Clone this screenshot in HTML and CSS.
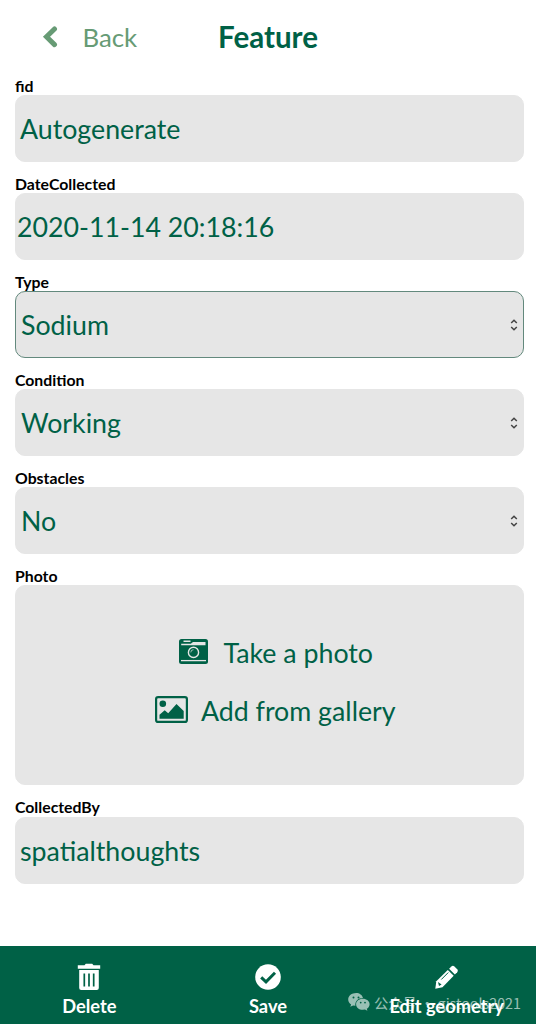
FILE: index.html
```html
<!DOCTYPE html>
<html lang="en">
<head>
<meta charset="utf-8">
<title>Feature</title>
<link rel="stylesheet" href="styles.css">
</head>
<body>
<div class="screen">
  <header class="header">
    <a class="back">
      <svg class="back-icon" width="16" height="24" viewBox="0 0 16 24"><path d="M12.500 4 4.500 11.800l8 7.800" fill="none" stroke="currentColor" stroke-width="5" stroke-linecap="round"/></svg>
      <span>Back</span>
    </a>
    <h1 class="title">Feature</h1>
  </header>
  <main class="form">
    <section class="field"><label class="label">fid</label><div class="box text">Autogenerate</div></section>
    <section class="field"><label class="label">DateCollected</label><div class="box date">2020-11-14 20:18:16</div></section>
    <section class="field"><label class="label">Type</label><div class="box select active"><span>Sodium</span><svg class="arrows" width="8" height="12" viewBox="0 0 8 12"><path d="M1.200 4 4 1.200 6.800 4M1.200 8 4 10.800 6.800 8"/></svg></div></section>
    <section class="field"><label class="label">Condition</label><div class="box select"><span>Working</span><svg class="arrows" width="8" height="12" viewBox="0 0 8 12"><path d="M1.200 4 4 1.200 6.800 4M1.200 8 4 10.800 6.800 8"/></svg></div></section>
    <section class="field"><label class="label">Obstacles</label><div class="box select"><span>No</span><svg class="arrows" width="8" height="12" viewBox="0 0 8 12"><path d="M1.200 4 4 1.200 6.800 4M1.200 8 4 10.800 6.800 8"/></svg></div></section>
    <section class="field photo-field"><label class="label">Photo</label>
      <div class="box photo">
        <div class="action camera">
          <svg width="29" height="25" viewBox="0 0 29 25"><rect width="29" height="25" rx="2.500" fill="currentColor"/><path d="M4.500 1.600h7v1.500h-7zM2.200 4.700h9.600l2.200-1.700h12.500v3.200H2.200z" fill="#e6e6e6"/><path d="M2 21.600h25" stroke="#e6e6e6" stroke-width="1.300"/><circle cx="14.500" cy="13.400" r="5.100" fill="none" stroke="#e6e6e6" stroke-width="1.400"/><path d="M11.800 13.400a2.700 2.700 0 0 1 2.700-2.700" fill="none" stroke="#e6e6e6" stroke-width=".7"/></svg>
          <span>Take a photo</span>
        </div>
        <div class="action gallery">
          <svg width="33" height="27" viewBox="0 0 33 27"><rect x="1.100" y="1.100" width="30.800" height="24.800" rx="2" fill="none" stroke="currentColor" stroke-width="2.200"/><circle cx="7.800" cy="7.800" r="3.300" fill="currentColor"/><path d="M4.500 22.800v-4l5.200-4.600 3.500 3L21.500 8l7.200 7v7.800z" fill="currentColor"/></svg>
          <span>Add from gallery</span>
        </div>
      </div>
    </section>
    <section class="field"><label class="label last-label">CollectedBy</label><div class="box text last">spatialthoughts</div></section>
  </main>
  <footer class="toolbar">
    <div class="watermark">
      <svg width="22" height="18" viewBox="0 0 22 18"><path d="M8.200 0C3.700 0 .2 2.800.2 6.400c0 2 1.100 3.800 2.900 5l-.8 2.400 2.800-1.400 2.300.4C6.700 8.400 10 5 15 5 14.300 2 11.500 0 8.200 0z"/><path d="M14.800 5.700c-3.800 0-6.700 2.400-6.700 5.500s2.900 5.600 6.700 5.600l2.200-.3 2.400 1.300-.6-2c1.800-1.100 2.800-2.700 2.800-4.600 0-3.100-3-5.500-6.800-5.500z"/><g fill="#006146"><circle cx="5.500" cy="4.500" r="1"/><circle cx="10.500" cy="4.500" r="1"/><circle cx="12.700" cy="9.600" r=".9"/><circle cx="17" cy="9.600" r=".9"/></g></svg>
      <span>公众号 · gistools2021</span>
    </div>
    <div class="tool">
      <svg width="28" height="30" viewBox="0 0 28 30"><path d="M2.800 3.300h6.700l1.300-1.600h6.400l1.300 1.600h6.700v3.400H2.800z" fill="#fff"/><path d="M4.200 8h19.600v18a2 2 0 0 1-2 2H6.200a2 2 0 0 1-2-2z" fill="#fff"/><path d="M9.300 11.500v13M14 11.500v13M18.700 11.500v13" stroke="#006146" stroke-width="1.700"/></svg>
      <span>Delete</span>
    </div>
    <div class="tool">
      <svg width="28" height="30" viewBox="0 0 28 30"><circle cx="14" cy="15" r="12.800" fill="#fff"/><path d="m7.200 15.300 4.800 4.500 9-9" fill="none" stroke="#006146" stroke-width="3"/></svg>
      <span>Save</span>
    </div>
    <div class="tool">
      <svg width="28" height="30" viewBox="0 0 28 30"><path d="m2.300 26.800 1-7.500L14.800 7.900l5.900 5.900L9.500 25.300z" fill="#fff"/><path d="m16.100 6.700 2.300-2.300a2.200 2.200 0 0 1 3 0l2.800 2.800a2.200 2.200 0 0 1 0 3l-2.300 2.300z" fill="#fff"/><path d="m8.300 17.500 7-7" stroke="#006146" stroke-width="1"/><path d="m5 20 3.600 2.600-2.600 1.400z" fill="#006146"/></svg>
      <span>Edit geometry</span>
    </div>
  </footer>
</div>
</body>
</html>
```
FILE: styles.css
```css
* { box-sizing: border-box; }
body {
  margin: 0;
  background: #fff;
  color: #006146;
  font-family: Lato, "Noto Sans CJK SC", sans-serif;
}
.screen {
  display: flex;
  flex-direction: column;
  height: 1024px;
  overflow: hidden;
}
.header {
  display: grid;
  grid-template-columns: 1fr auto 1fr;
  align-items: center;
  height: 76px;
  padding-bottom: 3px;
}
.back {
  display: flex;
  align-items: center;
  gap: 25px;
  padding-left: 41.500px;
  font-size: 25.800px;
  line-height: 30px;
  color: #679b75;
}
.title {
  margin: 0;
  font-size: 29.500px;
  font-weight: 700;
}
.form {
  flex: 1;
  padding: 0 12.500px 0 15px;
}
.field { height: 98.050px; }
.photo-field { height: 231.500px; }
.label {
  display: block;
  height: 19px;
  color: #000;
  font-size: 15.800px;
  line-height: 19px;
  font-weight: 700;
}
.last-label { line-height: 18px; }
.box {
  display: flex;
  align-items: center;
  height: 67px;
  padding: 0 5px 0;
  border: 1px solid #e6e6e6;
  border-radius: 10px;
  background: #e6e6e6;
  font-size: 26.750px;
}
.text { padding-left: 4px; }
.date { padding-left: 1px; }
.last { padding-top: 1px; }
.select { justify-content: space-between; }
.active { border-color: #63897d; }
.arrows {
  fill: none;
  stroke: #444;
  stroke-width: 1.500px;
}
.photo {
  flex-direction: column;
  height: 200px;
  padding: 51px 0 0 12px;
  gap: 26px;
}
.action {
  display: flex;
  align-items: center;
  height: 32px;
}
.camera {
  gap: 15px;
  padding-left: 2px;
}
.camera svg { margin-bottom: 3px; }
.gallery { gap: 13px; }
.gallery svg { margin-bottom: 3px; }
.toolbar {
  position: relative;
  display: grid;
  grid-template-columns: repeat(3, 1fr);
  height: 78px;
  background: #006146;
  color: #fff;
}
.tool {
  position: relative;
  display: flex;
  flex-direction: column;
  align-items: center;
  padding-top: 16px;
  font-size: 18.300px;
  font-weight: 700;
  line-height: 28px;
}
.watermark {
  position: absolute;
  left: 348px;
  top: 46px;
  display: flex;
  align-items: center;
  gap: 4px;
  height: 20px;
  color: #fff;
  fill: #fff;
  opacity: .6;
  font-family: "Noto Sans CJK SC", sans-serif;
  font-size: 14.300px;
  font-weight: 400;
  white-space: nowrap;
}
```
